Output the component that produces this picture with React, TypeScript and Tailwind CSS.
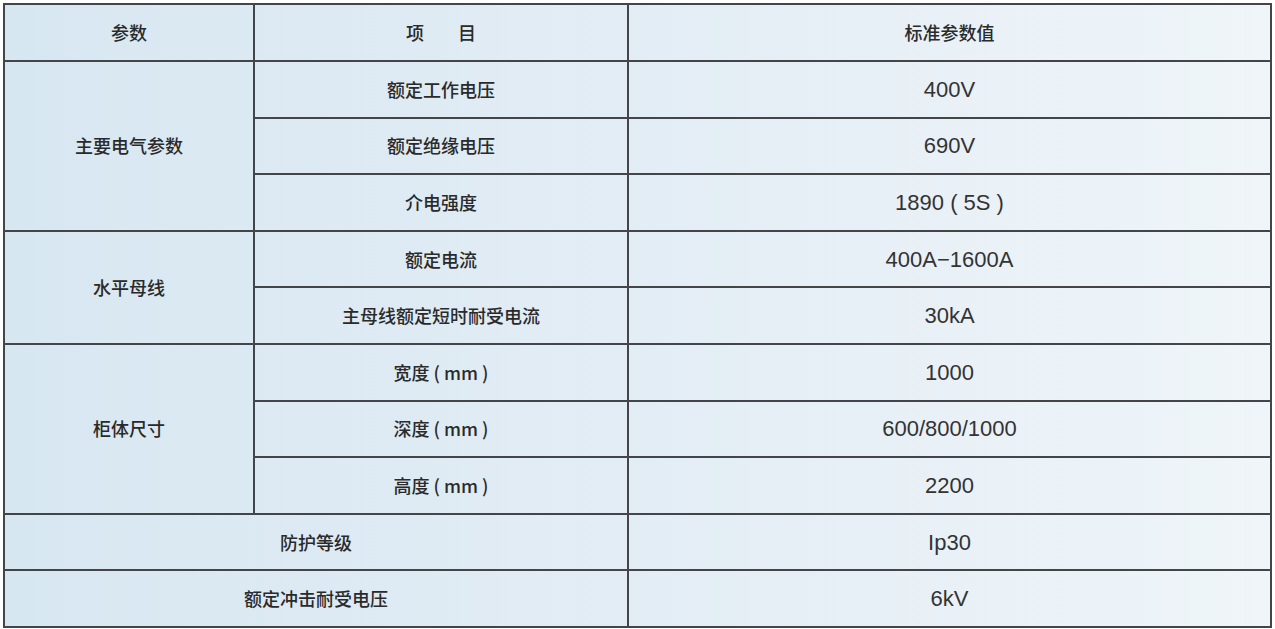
const cjk = "font-['Noto_Sans_CJK_SC','Noto_Sans',sans-serif] text-[18px] font-medium text-[#2a2a2a]";
const num = "font-['Liberation_Sans','Noto_Sans_CJK_SC',sans-serif] text-[22px] text-[#333333]";
const cell = "border-2 border-[#434548] text-center align-middle";

export default function App() {
  return (
    <div className="w-[1275px] h-[629px] bg-white p-[3px]">
      <table className="w-[1269px] h-[623px] table-fixed border-collapse bg-linear-to-r from-[#d7e7f1] via-[#e3edf5] to-[#eff5f9]">
        <colgroup>
          <col className="w-[250px]" />
          <col className="w-[374px]" />
          <col />
        </colgroup>
        <tbody>
          <tr className="h-[57px]">
            <td className={`${cell} ${cjk}`}>参数</td>
            <td className={`${cell} ${cjk}`}>
              <span>项</span>
              <span className="ml-[34px]">目</span>
            </td>
            <td className={`${cell} ${cjk}`}>标准参数值</td>
          </tr>
          <tr className="h-[56.6px]">
            <td rowSpan={3} className={`${cell} ${cjk}`}>主要电气参数</td>
            <td className={`${cell} ${cjk}`}>额定工作电压</td>
            <td className={`${cell} ${num}`}>400V</td>
          </tr>
          <tr className="h-[56.6px]">
            <td className={`${cell} ${cjk}`}>额定绝缘电压</td>
            <td className={`${cell} ${num}`}>690V</td>
          </tr>
          <tr className="h-[56.6px]">
            <td className={`${cell} ${cjk}`}>介电强度</td>
            <td className={`${cell} ${num}`}>1890 ( 5S )</td>
          </tr>
          <tr className="h-[56.6px]">
            <td rowSpan={2} className={`${cell} ${cjk}`}>水平母线</td>
            <td className={`${cell} ${cjk}`}>额定电流</td>
            <td className={`${cell} ${num}`}>400A−1600A</td>
          </tr>
          <tr className="h-[56.6px]">
            <td className={`${cell} ${cjk}`}>主母线额定短时耐受电流</td>
            <td className={`${cell} ${num}`}>30kA</td>
          </tr>
          <tr className="h-[56.6px]">
            <td rowSpan={3} className={`${cell} ${cjk}`}>柜体尺寸</td>
            <td className={`${cell} ${cjk}`}>宽度 ( mm )</td>
            <td className={`${cell} ${num}`}>1000</td>
          </tr>
          <tr className="h-[56.6px]">
            <td className={`${cell} ${cjk}`}>深度 ( mm )</td>
            <td className={`${cell} ${num}`}>600/800/1000</td>
          </tr>
          <tr className="h-[56.6px]">
            <td className={`${cell} ${cjk}`}>高度 ( mm )</td>
            <td className={`${cell} ${num}`}>2200</td>
          </tr>
          <tr className="h-[56.6px]">
            <td colSpan={2} className={`${cell} ${cjk}`}>防护等级</td>
            <td className={`${cell} ${num}`}>Ip30</td>
          </tr>
          <tr className="h-[56.6px]">
            <td colSpan={2} className={`${cell} ${cjk}`}>额定冲击耐受电压</td>
            <td className={`${cell} ${num}`}>6kV</td>
          </tr>
        </tbody>
      </table>
    </div>
  );
}
